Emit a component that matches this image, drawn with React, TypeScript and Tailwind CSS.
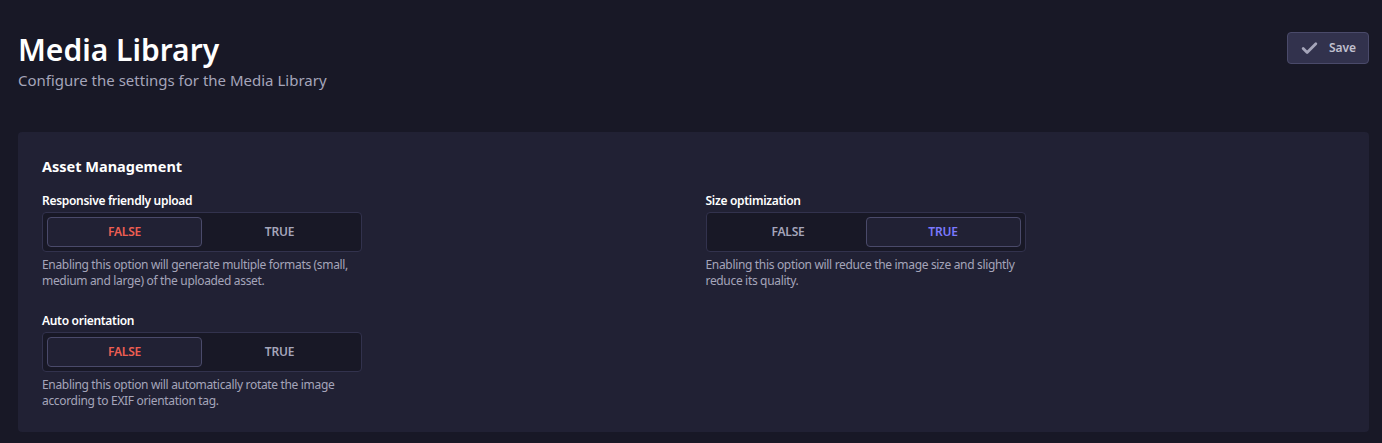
import { Check } from "lucide-react";

function BoolToggle({
  label,
  value,
  hint,
}: {
  label: string;
  value: boolean;
  hint: string;
}) {
  const base =
    "flex-1 flex items-center justify-center rounded-[4px] border text-[12px] font-semibold uppercase tracking-[-0.2px]";
  return (
    <div className="flex flex-col">
      <div className="text-[12px] font-semibold leading-4 tracking-[-0.3px] text-[#ffffff]">{label}</div>
      <div className="mt-[3px] flex h-10 w-[320px] rounded-[4px] border border-[#32324d] bg-[#181826] p-1">
        <div
          className={`${base} ${
            !value
              ? "border-[#4a4a6a] bg-[#212134] text-[#ee5e52]"
              : "border-transparent text-[#a5a5ba]"
          }`}
        >
          False
        </div>
        <div
          className={`${base} ${
            value
              ? "border-[#4a4a6a] bg-[#212134] text-[#7b79ff]"
              : "border-transparent text-[#a5a5ba]"
          }`}
        >
          True
        </div>
      </div>
      <p className="mt-[5px] w-[320px] text-[12px] leading-4 tracking-[-0.33px] text-[#a5a5ba]">{hint}</p>
    </div>
  );
}

export default function App() {
  return (
    <div
      className="min-h-[443px] bg-[#181826] pl-[18px] pr-[13px] text-white"
      style={{ fontFamily: '"Noto Sans", "Open Sans", sans-serif' }}
    >
      <div className="flex items-start justify-between pb-[42px] pt-[30px]">
        <div>
          <h1 className="text-[30px] font-semibold leading-10 text-white">Media Library</h1>
          <p className="text-[15px] leading-5 text-[#a5a5ba]">
            Configure the settings for the Media Library
          </p>
        </div>
        <button className="mt-[2px] flex h-8 w-[82px] items-center justify-center gap-[10px] rounded-[4px] border border-[#4a4a6a] bg-[#32324d] text-[12px] font-semibold text-[#c0c0cf]">
          <Check size={19} strokeWidth={3.5} className="text-[#a5a5ba]" />
          Save
        </button>
      </div>

      <div className="rounded-[4px] bg-[#212134] px-6 pb-[23px] pt-[22px]">
        <h2 className="text-[14.5px] font-bold leading-6 text-white">Asset Management</h2>
        <div className="mt-[15px] grid grid-cols-2 gap-x-6 gap-y-6">
          <BoolToggle
            label="Responsive friendly upload"
            value={false}
            hint="Enabling this option will generate multiple formats (small, medium and large) of the uploaded asset."
          />
          <BoolToggle
            label="Size optimization"
            value={true}
            hint="Enabling this option will reduce the image size and slightly reduce its quality."
          />
          <BoolToggle
            label="Auto orientation"
            value={false}
            hint="Enabling this option will automatically rotate the image according to EXIF orientation tag."
          />
        </div>
      </div>
    </div>
  );
}
